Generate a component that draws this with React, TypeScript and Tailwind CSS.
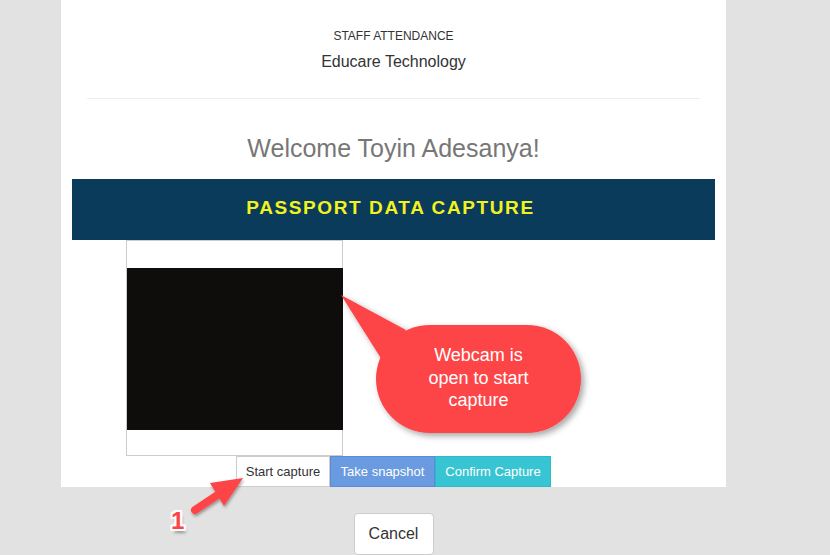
import React from "react";

export default function App() {
  return (
    <div
      className="relative w-[830px] h-[555px] overflow-hidden bg-[#e2e2e2]"
      style={{ fontFamily: '"Liberation Sans", Arial, sans-serif' }}
    >
      <div className="ml-[61px] w-[665px] bg-white flex flex-col">
        <div className="pt-[28px] text-center text-[12px] leading-[16px] text-[#333]">STAFF ATTENDANCE</div>
        <div className="mt-[8px] text-center text-[16px] leading-[20px] text-[#333]">Educare Technology</div>
        <div className="mt-[26px] mx-[26px] border-t border-[#eeeeee]" />
        <div className="mt-[35px] text-center text-[25px] leading-[28px] text-[#777]">Welcome Toyin Adesanya!</div>
        <div className="mt-[17px] mx-[11px] h-[61px] bg-[#0b3b5a] flex items-center justify-center pb-[3px] pr-[6px]">
          <span className="text-[19px] font-bold tracking-[1.6px] text-[#f2f21f]">PASSPORT DATA CAPTURE</span>
        </div>
        <div className="ml-[65px] w-[217px] h-[216px] border border-[#cccccc] pt-[27px]">
          <div className="w-[216px] h-[162px] bg-[#0f0d0b]" />
        </div>
        <div className="ml-[175px] flex h-[31px] text-[13px] leading-none">
          <div className="w-[94px] flex items-center justify-center bg-white border border-[#cccccc] text-[#333] pb-[1px]">Start capture</div>
          <div className="w-[105px] flex items-center justify-center bg-[#6a9be0] border border-[#5a8bd8] text-white pb-[1px]">Take snapshot</div>
          <div className="w-[116px] flex items-center justify-center bg-[#38c5d3] border border-[#2fb8c6] text-white pb-[1px]">Confirm Capture</div>
        </div>
      </div>
      <div className="ml-[61px] w-[665px] flex justify-center pt-[26px]">
        <div className="w-[80px] h-[42px] bg-white border border-[#cccccc] rounded-[4px] flex items-center justify-center text-[16px] text-[#333]">Cancel</div>
      </div>

      {/* Annotation overlays */}
      <svg className="absolute left-0 top-0 pointer-events-none" width="830" height="555">
        <defs>
          <filter id="sh" x="-20%" y="-20%" width="140%" height="140%">
            <feDropShadow dx="3" dy="3" stdDeviation="3" floodColor="#000" floodOpacity="0.35" />
          </filter>
          <filter id="sh2" x="-30%" y="-30%" width="160%" height="160%">
            <feDropShadow dx="1" dy="2" stdDeviation="1.5" floodColor="#000" floodOpacity="0.35" />
          </filter>
        </defs>
        <g filter="url(#sh)" fill="#fd4447">
          <rect x="376" y="325" width="205" height="108" rx="54" ry="54" />
          <polygon points="341,295 406,330 382,360" />
        </g>
        <g filter="url(#sh2)" fill="#fd4447">
          <line x1="195" y1="510" x2="222" y2="492" stroke="#fd4447" strokeWidth="8" strokeLinecap="round" />
          <polygon points="243,478 210,483 224,506" />
        </g>
      </svg>
      <div className="absolute left-[376px] top-[344px] w-[205px] text-center text-white text-[18px] leading-[22.5px] pointer-events-none">
        Webcam is
        <br />
        open to start
        <br />
        capture
      </div>
      <div
        className="absolute left-[171px] top-[509px] text-[24px] font-bold text-[#fd4447] leading-none"
        style={{ textShadow: "-2px 0 #fff, 2px 0 #fff, 0 -2px #fff, 0 2px #fff, -2px -2px #fff, 2px 2px #fff, -2px 2px #fff, 2px -2px #fff, 2px 4px 3px rgba(0,0,0,0.35)" }}
      >
        1
      </div>
    </div>
  );
}
